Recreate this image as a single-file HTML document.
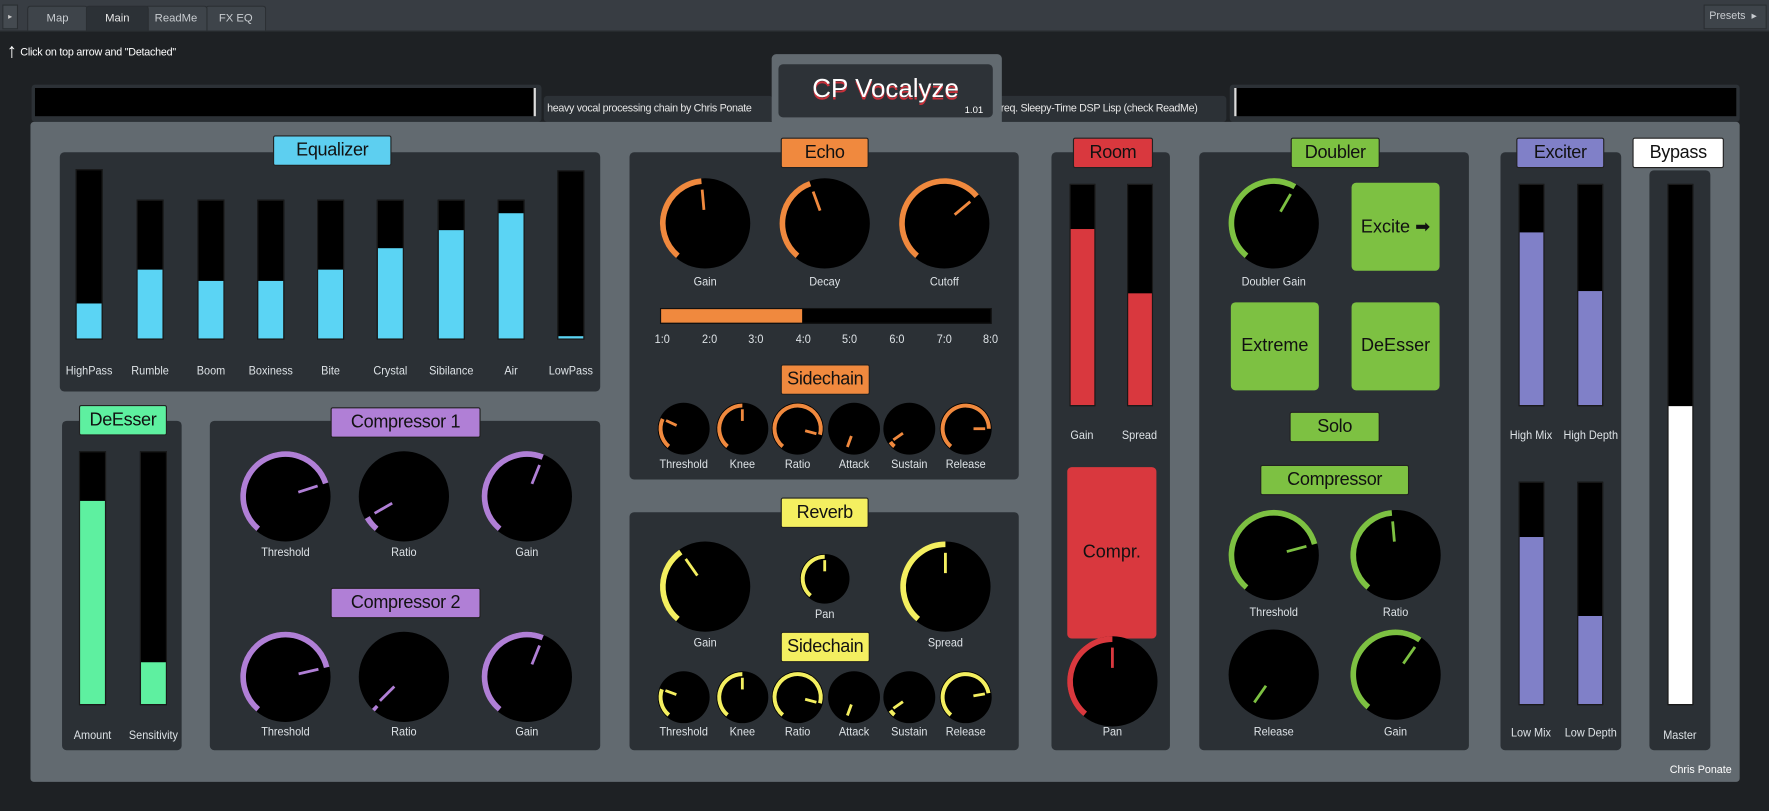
<!DOCTYPE html>
<html><head><meta charset="utf-8">
<style>
*{margin:0;padding:0;box-sizing:border-box}
html,body{width:1769px;height:811px;overflow:hidden;background:#1e2124}
#s{position:absolute;left:0;top:0;width:1568px;height:719px;transform:scale(1.12819);transform-origin:0 0;font-family:"Liberation Sans",sans-serif;color:#e6e8ea}
.a{position:absolute}
.pan{position:absolute;background:#2b3035;border-radius:4px}
.lab{position:absolute;color:#111;font-size:16px;text-align:center;line-height:25px;border:1px solid #222;border-radius:2px;letter-spacing:-0.3px}
.t{position:absolute;font-size:10.5px;color:#dde2e6;text-align:center;white-space:nowrap;transform:translateX(-50%) scaleX(0.92)}
.tr{position:absolute;background:#000;border:1px solid #1a1a1a}
.btn{position:absolute;border-radius:4px;color:#111;font-size:16px;display:flex;align-items:center;justify-content:center}
.tab{position:absolute;top:5px;height:22px;font-size:10px;color:#c8ccd0;line-height:22px;text-align:center;background:#3e444a;border:1px solid #2a2e32;border-bottom:none;border-radius:3px 3px 0 0}
.hd{position:absolute;top:85px;width:203px;height:23px;background:#2c3136;border-radius:3px;font-size:9.5px;color:#e6e6e6;line-height:24px;padding-left:3px;white-space:nowrap;letter-spacing:-0.3px}
</style></head><body>
<div id="s">
<div class="a" style="left:0;top:0;width:1568px;height:28px;background:#383d43;border-bottom:1px solid #2a2e31"></div>
<div class="a" style="left:2px;top:4px;width:14px;height:22px;background:#444a50;border:1px solid #2a2e32;font-size:7px;color:#ccc;line-height:22px;text-align:center">▸</div>
<div class="tab" style="left:24px;width:54px">Map</div>
<div class="tab" style="left:182px;width:54px">FX EQ</div>
<div class="tab" style="left:128px;width:56px">ReadMe</div>
<div class="tab" style="left:76px;width:56px;background:#2c3136;color:#e8e8e8">Main</div>
<div class="a" style="left:1510px;top:4px;width:56px;height:22px;background:#3e444a;border:1px solid #2a2e32;font-size:9.5px;color:#c8ccd0;line-height:20px;padding-left:4px">Presets &nbsp;▸</div>
<div class="a" style="left:6px;top:36px;font-size:18px;color:#fff;line-height:18px">↑</div>
<div class="a" style="left:18px;top:41px;font-size:9.5px;color:#fff;letter-spacing:-0.2px">Click on top arrow and "Detached"</div>

<div class="a" style="left:28px;top:75px;width:452px;height:33px;background:#2c3136;border-radius:3px"></div>
<div class="a" style="left:31px;top:78px;width:444px;height:25px;background:#000;border-right:2px solid #ddd"></div>
<div class="hd" style="left:482px">heavy vocal processing chain by Chris Ponate</div>
<div class="hd" style="left:884px">req. Sleepy-Time DSP Lisp (check ReadMe)</div>
<div class="a" style="left:1090px;top:75px;width:452px;height:33px;background:#2c3136;border-radius:3px"></div>
<div class="a" style="left:1094px;top:78px;width:445px;height:25px;background:#000;border-left:2px solid #ddd"></div>
<div class="a" style="left:27px;top:108px;width:1515px;height:585px;background:#626a70;border-radius:3px"></div>
<div class="a" style="left:684px;top:48px;width:204px;height:62px;background:#626a70;border-radius:4px 4px 0 0"></div>
<div class="a" style="left:690px;top:57px;width:190px;height:47px;background:#2d3237;border-radius:4px"></div>
<div class="a" style="left:690px;top:65px;width:190px;text-align:center;font-size:23px;color:#fff;text-shadow:0 2px 0 #c8303a">CP Vocalyze</div>
<div class="a" style="left:855px;top:92px;font-size:8.5px;color:#fff">1.01</div>

<div class="pan" style="left:53px;top:135px;width:479px;height:212px"></div>
<div class="pan" style="left:55px;top:373px;width:106px;height:292px"></div>
<div class="pan" style="left:186px;top:373px;width:346px;height:292px"></div>
<div class="pan" style="left:558px;top:135px;width:345px;height:290px"></div>
<div class="pan" style="left:558px;top:454px;width:345px;height:211px"></div>
<div class="pan" style="left:932px;top:135px;width:105px;height:530px"></div>
<div class="pan" style="left:1063px;top:135px;width:239px;height:530px"></div>
<div class="pan" style="left:1330px;top:135px;width:107px;height:530px"></div>
<div class="pan" style="left:1462px;top:151px;width:54px;height:514px"></div>

<div class="lab" style="left:242px;top:120px;width:105px;background:#5dcff0">Equalizer</div>
<div class="lab" style="left:70px;top:359px;width:78px;background:#5ef0a0">DeEsser</div>
<div class="lab" style="left:293px;top:361px;width:133px;background:#b07fd6">Compressor 1</div>
<div class="lab" style="left:293px;top:521px;width:133px;background:#b07fd6">Compressor 2</div>
<div class="lab" style="left:692px;top:122px;width:78px;background:#f0893e">Echo</div>
<div class="lab" style="left:692px;top:323px;width:79px;background:#f0893e">Sidechain</div>
<div class="lab" style="left:692px;top:441px;width:78px;background:#f4ef60">Reverb</div>
<div class="lab" style="left:692px;top:560px;width:79px;background:#f4ef60">Sidechain</div>
<div class="lab" style="left:951px;top:122px;width:71px;background:#d9383e">Room</div>
<div class="lab" style="left:1144px;top:122px;width:79px;background:#7dc142">Doubler</div>
<div class="lab" style="left:1143px;top:365px;width:80px;background:#7dc142">Solo</div>
<div class="lab" style="left:1117px;top:412px;width:132px;background:#7dc142">Compressor</div>
<div class="lab" style="left:1344px;top:122px;width:78px;background:#8080c8">Exciter</div>
<div class="lab" style="left:1447px;top:122px;width:81px;background:#fff">Bypass</div>

<div class="btn" style="left:1198px;top:162px;width:78px;height:78px;background:#7dc142">Excite ➡</div>
<div class="btn" style="left:1091px;top:268px;width:78px;height:78px;background:#7dc142">Extreme</div>
<div class="btn" style="left:1198px;top:268px;width:78px;height:78px;background:#7dc142">DeEsser</div>
<div class="btn" style="left:946px;top:414px;width:79px;height:152px;background:#d9383e">Compr.</div>

<div class="a" style="left:585px;top:273px;width:294px;height:14px;background:#000;border:1px solid #111"></div>
<div class="a" style="left:586px;top:274px;width:125px;height:12px;background:#f0893e"></div>
<div class="a" style="left:1480px;top:677px;font-size:9.5px;color:#fff">Chris Ponate</div>
<svg id="k" class="a" style="left:0;top:0" width="1568" height="719"></svg>
<div id="x"></div>
</div>
<script>
var S=document.getElementById('s'),X=document.getElementById('x'),K=document.getElementById('k'),h='',sv='';
function t(x,y,s){h+='<div class="t" style="left:'+x+'px;top:'+(y-7)+'px">'+s+'</div>';}
function tr(x,y1,y2,f,c,w){w=w||24;h+='<div class="tr" style="left:'+x+'px;top:'+y1+'px;width:'+w+'px;height:'+(y2-y1)+'px"></div>';
 h+='<div class="a" style="left:'+(x+1)+'px;top:'+f+'px;width:'+(w-2)+'px;height:'+(y2-f-1)+'px;background:'+c+'"></div>';}
function P(cx,cy,R,a){a=a*Math.PI/180;return [cx+R*Math.sin(a),cy-R*Math.cos(a)];}
function kn(cx,cy,r,v,c,lbl,ly){
 sv+='<circle cx="'+cx+'" cy="'+cy+'" r="'+r+'" fill="#000"/>';
 var R=r-2.5,s=-140;
 if(v>s){var p1=P(cx,cy,R,s),p2=P(cx,cy,R,v);sv+='<path d="M'+p1[0]+' '+p1[1]+'A'+R+' '+R+' 0 '+((v-s)>180?1:0)+' 1 '+p2[0]+' '+p2[1]+'" fill="none" stroke="'+c+'" stroke-width="'+(r>30?5:3.5)+'"/>';}
 var a=P(cx,cy,r*0.3,v),b=P(cx,cy,r*0.75,v);
 sv+='<line x1="'+a[0]+'" y1="'+a[1]+'" x2="'+b[0]+'" y2="'+b[1]+'" stroke="'+c+'" stroke-width="2.5"/>';
 if(lbl)t(cx,ly,lbl);}
var B='#5bd4f4';
tr(67,150,301,269,B);tr(121,177,301,239,B);tr(175,177,301,249,B);tr(228,177,301,249,B);tr(281,177,301,239,B);tr(334,177,301,220,B);tr(388,177,301,204,B);tr(441,177,301,189,B);tr(494,151,301,298,B);
[['HighPass',79],['Rumble',133],['Boom',187],['Boxiness',240],['Bite',293],['Crystal',346],['Sibilance',400],['Air',453],['LowPass',506]].forEach(function(e){t(e[1],330,e[0]);});
tr(70,400,625,444,'#5ef0a0');tr(124,400,625,587,'#5ef0a0');t(82,653,'Amount');t(136,653,'Sensitivity');
var U='#b07fd6';
kn(253,440,40,72,U,'Threshold',491);kn(358,440,40,-120,U,'Ratio',491);kn(467,440,40,22,U,'Gain',491);
kn(253,600,40,77,U,'Threshold',650);kn(358,600,40,-135,U,'Ratio',650);kn(467,600,40,22,U,'Gain',650);
var O='#f0893e';
kn(625,198,40,-5,O,'Gain',251);kn(731,198,40,-20,O,'Decay',251);kn(837,198,40,50,O,'Cutoff',251);
['1:0','2:0','3:0','4:0','5:0','6:0','7:0','8:0'].forEach(function(s,i){t(587+i*41.6,302,s);});
var sx=[606,658,707,757,806,856],sn=['Threshold','Knee','Ratio','Attack','Sustain','Release'];
[-65,0,105,-160,-125,90].forEach(function(v,i){kn(sx[i],380,23,v,O,sn[i],413);});
var Y='#f4ef60';
kn(625,520,40,-35,Y,'Gain',571);kn(731,513,22,0,Y,'Pan',546);kn(838,520,40,0,Y,'Spread',571);
[-70,0,105,-160,-125,80].forEach(function(v,i){kn(sx[i],618,23,v,Y,sn[i],650);});
var RD='#d9383e';
tr(948,163,360,203,RD,23);tr(999,163,360,260,RD,23);t(959,387,'Gain');t(1010,387,'Spread');
kn(986,604,40,0,RD,'Pan',650);
var G='#7dc142';
kn(1129,198,40,30,G,'Doubler Gain',251);
kn(1129,492,40,75,G,'Threshold',544);kn(1237,492,40,-5,G,'Ratio',544);kn(1129,598,40,-145,G,'Release',650);kn(1237,598,40,35,G,'Gain',650);
var V='#8080c8';
tr(1346,163,360,206,V,23);tr(1398,163,360,258,V,23);t(1357,387,'High Mix');t(1410,387,'High Depth');
tr(1346,427,625,476,V,23);tr(1398,427,625,546,V,23);t(1357,651,'Low Mix');t(1410,651,'Low Depth');
tr(1478,163,625,360,'#fff',23);t(1489,653,'Master');
K.innerHTML=sv;X.innerHTML=h;
</script>
</body></html>
